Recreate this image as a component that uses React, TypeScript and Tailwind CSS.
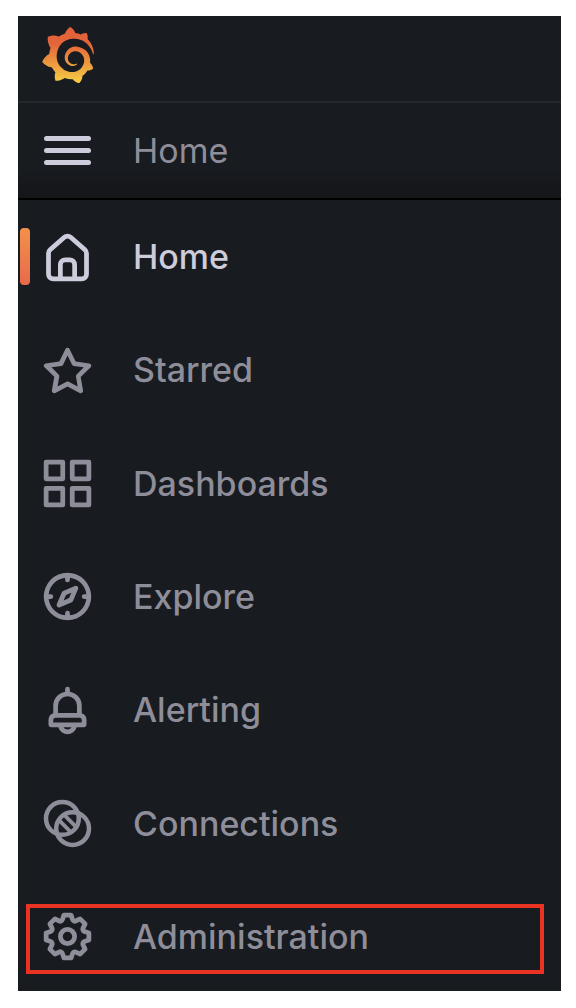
import { SiGrafana } from "react-icons/si";

const icons = {
  home: "M20,8h0L14,2.74a3,3,0,0,0-4,0L4,8a3,3,0,0,0-1,2.26V19a3,3,0,0,0,3,3H18a3,3,0,0,0,3-3V10.25A3,3,0,0,0,20,8ZM14,20H10V15a1,1,0,0,1,1-1h2a1,1,0,0,1,1,1Zm5-1a1,1,0,0,1-1,1H16V15a3,3,0,0,0-3-3H11a3,3,0,0,0-3,3v5H6a1,1,0,0,1-1-1V10.25a1,1,0,0,1,.34-.75l6-5.25a1,1,0,0,1,1.32,0l6,5.25a1,1,0,0,1,.34.75Z",
  star: "M22,9.67A1,1,0,0,0,21.14,9l-5.69-.83L12.9,3a1,1,0,0,0-1.8,0L8.55,8.16,2.86,9a1,1,0,0,0-.81.68,1,1,0,0,0,.25,1l4.13,4-1,5.68A1,1,0,0,0,6.9,21.44L12,18.77l5.1,2.67a.93.93,0,0,0,.46.12,1,1,0,0,0,.59-.19,1,1,0,0,0,.4-1l-1-5.68,4.13-4A1,1,0,0,0,22,9.67Zm-6.15,4a1,1,0,0,0-.29.88l.72,4.2-3.76-2a1.06,1.06,0,0,0-.94,0l-3.76,2,.72-4.2a1,1,0,0,0-.29-.88l-3-3,4.21-.61a1,1,0,0,0,.76-.55L12,5.7l1.88,3.82a1,1,0,0,0,.76.55l4.21.61Z",
  apps: "M10,13H3a1,1,0,0,0-1,1v7a1,1,0,0,0,1,1h7a1,1,0,0,0,1-1V14A1,1,0,0,0,10,13ZM9,20H4V15H9ZM21,2H14a1,1,0,0,0-1,1v7a1,1,0,0,0,1,1h7a1,1,0,0,0,1-1V3A1,1,0,0,0,21,2ZM20,9H15V4h5Zm1,4H14a1,1,0,0,0-1,1v7a1,1,0,0,0,1,1h7a1,1,0,0,0,1-1V14A1,1,0,0,0,21,13Zm-1,7H15V15h5ZM10,2H3A1,1,0,0,0,2,3v7a1,1,0,0,0,1,1h7a1,1,0,0,0,1-1V3A1,1,0,0,0,10,2ZM9,9H4V4H9Z",
  compass: "M12,2A10,10,0,1,0,22,12,10,10,0,0,0,12,2Zm1,17.93V19a1,1,0,0,0-2,0v.93A8,8,0,0,1,4.07,13H5a1,1,0,0,0,0-2H4.07A8,8,0,0,1,11,4.07V5a1,1,0,0,0,2,0V4.07A8,8,0,0,1,19.93,11H19a1,1,0,0,0,0,2h.93A8,8,0,0,1,13,19.93ZM15.14,7.55l-5,2.12a1,1,0,0,0-.52.52l-2.12,5a1,1,0,0,0,.21,1.1,1,1,0,0,0,.7.3.93.93,0,0,0,.4-.09l5-2.12a1,1,0,0,0,.52-.52l2.12-5a1,1,0,0,0-1.31-1.31Zm-2.49,5.1-2.28,1,1-2.28,2.28-1Z",
  bell: "M18,13.18V10a6,6,0,0,0-5-5.91V3a1,1,0,0,0-2,0V4.09A6,6,0,0,0,6,10v3.18A3,3,0,0,0,4,16v2a1,1,0,0,0,1,1H8.14a4,4,0,0,0,7.72,0H19a1,1,0,0,0,1-1V16A3,3,0,0,0,18,13.18ZM8,10a4,4,0,0,1,8,0v3H8Zm4,10a2,2,0,0,1-1.72-1h3.44A2,2,0,0,1,12,20Zm6-3H6V16a1,1,0,0,1,1-1H17a1,1,0,0,1,1,1Z",
  cog: "M21.32,9.55l-1.89-.63.89-1.78A1,1,0,0,0,20.13,6L18,3.87a1,1,0,0,0-1.15-.19l-1.78.89-.63-1.89A1,1,0,0,0,13.5,2h-3a1,1,0,0,0-.95.68L8.92,4.57,7.14,3.68A1,1,0,0,0,6,3.87L3.87,6a1,1,0,0,0-.19,1.15l.89,1.78-1.89.63A1,1,0,0,0,2,10.5v3a1,1,0,0,0,.68.95l1.89.63-.89,1.78A1,1,0,0,0,3.87,18L6,20.13a1,1,0,0,0,1.15.19l1.78-.89.63,1.89a1,1,0,0,0,.95.68h3a1,1,0,0,0,.95-.68l.63-1.89,1.78.89A1,1,0,0,0,18,20.13L20.13,18a1,1,0,0,0,.19-1.15l-.89-1.78,1.89-.63A1,1,0,0,0,22,13.5v-3A1,1,0,0,0,21.32,9.55ZM20,12.78l-1.2.4A2,2,0,0,0,17.64,16l.57,1.14-1.1,1.1L16,17.64a2,2,0,0,0-2.79,1.16l-.4,1.2H11.22l-.4-1.2A2,2,0,0,0,8,17.64l-1.14.57-1.1-1.1L6.36,16A2,2,0,0,0,5.2,13.18L4,12.78V11.22l1.2-.4A2,2,0,0,0,6.36,8L5.79,6.89l1.1-1.1L8,6.36A2,2,0,0,0,10.82,5.2l.4-1.2h1.56l.4,1.2A2,2,0,0,0,16,6.36l1.14-.57,1.1,1.1L17.64,8a2,2,0,0,0,1.16,2.79l1.2.4ZM12,8a4,4,0,1,0,4,4A4,4,0,0,0,12,8Zm0,6a2,2,0,1,1,2-2A2,2,0,0,1,12,14Z",
};

type IconName = keyof typeof icons | "connections";

function Icon({ name }: { name: IconName }) {
  if (name === "connections") {
    return (
      <svg viewBox="0 0 24 24" className="size-[57px] shrink-0" fill="none" stroke="currentColor" strokeWidth="1.9" aria-hidden="true">
        <circle cx="9.85" cy="9.85" r="6.9" />
        <circle cx="14.15" cy="14.15" r="6.9" />
        <path d="M10.6 8.4l5 5M8.4 10.6l5 5" strokeWidth="1.6" />
      </svg>
    );
  }
  return (
    <svg viewBox="0 0 24 24" className="size-[57px] shrink-0" fill="currentColor" aria-hidden="true">
      <path d={icons[name]} />
    </svg>
  );
}

const items: { label: string; icon: IconName; active?: boolean; marked?: boolean }[] = [
  { label: "Home", icon: "home", active: true },
  { label: "Starred", icon: "star" },
  { label: "Dashboards", icon: "apps" },
  { label: "Explore", icon: "compass" },
  { label: "Alerting", icon: "bell" },
  { label: "Connections", icon: "connections" },
  { label: "Administration", icon: "cog", marked: true },
];

export default function App() {
  return (
    <main className="bg-white pt-4 pr-[15px] pb-[17px] pl-[18px] font-['Inter',sans-serif] text-[34px] leading-10 text-[#8e8d9a]">
      <div className="bg-[#181b1f]">
        <header className="flex h-[87px] items-start border-b-2 border-[#24272c] pt-[11px] pl-[22px]">
          <svg className="absolute size-0" aria-hidden="true">
            <defs>
              <linearGradient id="flame" x1="0" y1="1" x2="0" y2="0">
                <stop offset="0" stopColor="#f7cf45" />
                <stop offset="0.3" stopColor="#eda041" />
                <stop offset="0.7" stopColor="#e3653a" />
                <stop offset="1" stopColor="#e2603a" />
              </linearGradient>
            </defs>
          </svg>
          <a href="#" aria-label="Grafana">
            <SiGrafana className="size-14" fill="url(#flame)" />
          </a>
        </header>

        <div className="flex h-[97px] items-center gap-[42px] border-b-2 border-black bg-linear-to-b from-[#181b1f] from-70% to-[#141619] pl-[26px]">
          <button type="button" aria-label="Toggle menu" className="flex w-[47px] flex-col gap-[7px] text-[#ccccdc]">
            <span className="h-[5px] rounded-full bg-current" />
            <span className="h-[5px] rounded-full bg-current" />
            <span className="h-[5px] rounded-full bg-current" />
          </button>
          <span>Home</span>
        </div>

        <nav aria-label="Main">
          <ul className="flex min-h-[791px] flex-col justify-between pt-[23px] pb-5 font-medium">
            {items.map((item) => (
              <li key={item.label} className="relative">
                {item.active && (
                  <span className="absolute top-[5px] left-[2px] h-[57px] w-[10px] rounded-[4px] bg-linear-to-b from-[#f2914b] to-[#e76a4a]" />
                )}
                <a
                  href="#"
                  className={`flex h-[68px] items-center gap-[37px] pl-[21px] ${item.active ? "text-[#ccccdc]" : ""}`}
                >
                  <Icon name={item.icon} />
                  <span>{item.label}</span>
                </a>
                {item.marked && (
                  <span className="pointer-events-none absolute top-[1px] right-[17px] left-2 h-[70px] border-4 border-[#ea3323]" />
                )}
              </li>
            ))}
          </ul>
        </nav>
      </div>
    </main>
  );
}
